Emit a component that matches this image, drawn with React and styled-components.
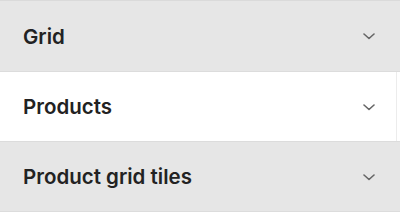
import React from "react";
import styled, { createGlobalStyle } from "styled-components";

const GlobalStyle = createGlobalStyle`
  html, body {
    margin: 0;
    padding: 0;
    background: #e6e6e6;
  }
  body {
    font-family: Inter, "Noto Sans", sans-serif;
  }
`;

const Panel = styled.div`
  width: 400px;
  display: flex;
  flex-direction: column;
  border-top: 1px solid #dadada;
`;

const Row = styled.div`
  height: ${(p) => (p.first ? "70px" : "69px")};
  display: flex;
  align-items: center;
  justify-content: space-between;
  padding: 0 25px 0 23px;
  background: ${(p) => (p.active ? "#ffffff" : "#e6e6e6")};
  border-bottom: 1px solid #dcdcdc;
  box-shadow: ${(p) => (p.active ? "inset -3px 0 0 #fff, inset -4px 0 0 #ececec" : "none")};
  cursor: pointer;
`;

const Title = styled.span`
  font-size: 20.5px;
  font-weight: 600;
  color: #222222;
  letter-spacing: 0;
`;

const Chevron = () => (
  <svg width="12" height="12" viewBox="0 0 12 12" fill="none">
    <path d="M1 4L6 8.5L11 4" stroke="#666" strokeWidth="1.6" strokeLinecap="round" strokeLinejoin="round" />
  </svg>
);

const sections = [
  { id: 1, title: "Grid", first: true },
  { id: 2, title: "Products", active: true },
  { id: 3, title: "Product grid tiles" },
];

export default function App() {
  return (
    <>
      <GlobalStyle />
      <Panel>
        {sections.map((s) => (
          <Row key={s.id} active={s.active} first={s.first}>
            <Title>{s.title}</Title>
            <Chevron />
          </Row>
        ))}
      </Panel>
    </>
  );
}
